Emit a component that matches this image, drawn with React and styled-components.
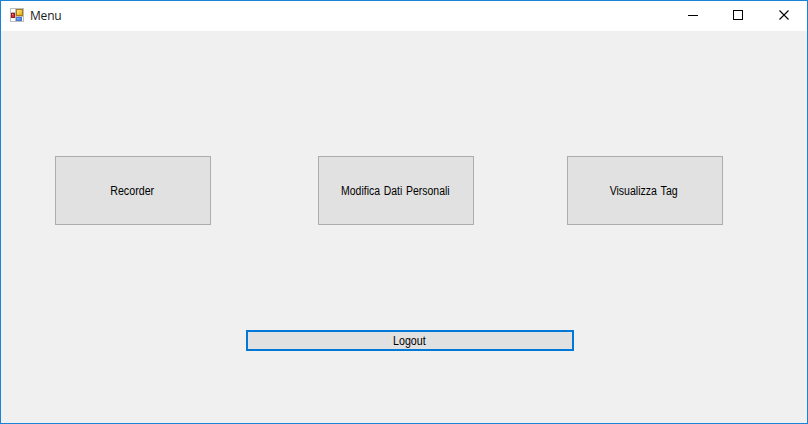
import React from 'react';
import styled, { createGlobalStyle } from 'styled-components';

const GlobalStyle = createGlobalStyle`
  *, *::before, *::after { box-sizing: border-box; }
  body { margin: 0; overflow: hidden; }
`;

const Window = styled.main`
  display: flex;
  flex-direction: column;
  width: 808px;
  height: 424px;
  border: 1px solid #1883d7;
  background: #f0f0f0;
  color: #000;
`;

const TitleBar = styled.header`
  display: flex;
  height: 30px;
  padding-left: 9px;
  background: #fff;
`;

const AppIcon = styled.svg`
  display: block;
  width: 14px;
  height: 14px;
  margin-top: 7px;
`;

const Title = styled.h1`
  flex: 1;
  margin: 0 0 0 6px;
  color: #1a1a1a;
  font: 400 12px/30px 'Open Sans', 'Noto Sans', sans-serif;
  letter-spacing: -0.2px;
`;

const CaptionButton = styled.button`
  display: flex;
  align-items: flex-start;
  width: ${(p) => p.$width}px;
  height: 29px;
  padding: 9px 0 0 17px;
  border: 0;
  background: transparent;
`;

const CaptionGlyph = styled.svg`
  display: block;
  flex: none;
  width: 11px;
  height: 11px;
  fill: none;
  stroke: #000;
`;

const Content = styled.section`
  display: flex;
  flex-direction: column;
  flex: 1;
  padding-top: 125px;
`;

const ActionRow = styled.div`
  display: grid;
  grid-template-columns: 263px 249px 156px;
  padding-left: 54px;
`;

const FormButton = styled.button`
  display: flex;
  align-items: center;
  justify-content: center;
  width: 156px;
  height: 69px;
  padding: 1px 0 0;
  border: 1px solid #adadad;
  border-radius: 0;
  background: #e1e1e1;
  color: #000;
  font: 400 12px/14px 'Liberation Sans', Arial, sans-serif;
  word-spacing: 1px;
  white-space: pre;
`;

const Label = styled.span`
  transform: translateX(${(p) => p.$nudge || 0}px) scaleX(${(p) => p.$stretch});
`;

const LogoutButton = styled(FormButton)`
  width: 328px;
  height: 21px;
  margin: 105px 0 0 245px;
  border: 2px solid #0078d7;
`;

export default function App() {
  return (
    <>
      <GlobalStyle />
      <Window>
        <TitleBar>
          <AppIcon viewBox="0 0 14 14" shapeRendering="crispEdges" aria-hidden="true">
            <defs>
              <linearGradient id="gold" x2="1" y2="1">
                <stop stopColor="#ffe990" />
                <stop offset="1" stopColor="#e9a900" />
              </linearGradient>
              <linearGradient id="blue" x2="1" y2="1">
                <stop stopColor="#8dbbff" />
                <stop offset="1" stopColor="#3a71d8" />
              </linearGradient>
            </defs>
            <path fill="#bdbdbd" d="M0 0h14v14H0z" />
            <path fill="#fff" d="M1 1h4v3H1zM1 10h4v3H1zM12 9h1v4h-1z" />
            <path fill="#9e1616" d="M1 5h4v5H1z" />
            <path fill="#d53b32" d="M2 6h2v3H2z" />
            <path fill="#f09a88" d="M2 6h1v1H2z" />
            <path fill="#a77918" d="M6 1h7v7H6z" />
            <path fill="url(#gold)" d="M7 2h5v5H7z" />
            <path fill="#4878cf" d="M6 9h6v4H6z" />
            <path fill="url(#blue)" d="M7 10h4v2H7z" />
          </AppIcon>
          <Title>Menu</Title>
          <CaptionButton $width={45} aria-label="Minimize">
            <CaptionGlyph viewBox="0 0 11 11" shapeRendering="crispEdges">
              <path d="M0 5.5h10" />
            </CaptionGlyph>
          </CaptionButton>
          <CaptionButton $width={46} aria-label="Maximize">
            <CaptionGlyph viewBox="0 0 11 11" shapeRendering="crispEdges">
              <path d="M.5.5h9v9h-9z" />
            </CaptionGlyph>
          </CaptionButton>
          <CaptionButton $width={45} aria-label="Close">
            <CaptionGlyph viewBox="0 0 11 11">
              <path d="m.5.5 9 9m0-9-9 9" strokeWidth="1.1" />
            </CaptionGlyph>
          </CaptionButton>
        </TitleBar>
        <Content>
          <ActionRow>
            <FormButton>
              <Label $stretch={0.89} $nudge={-0.5}>Recorder</Label>
            </FormButton>
            <FormButton>
              <Label $stretch={0.87} $nudge={-1}>Modifica Dati Personali</Label>
            </FormButton>
            <FormButton>
              <Label $stretch={0.88} $nudge={-1}>Visualizza Tag</Label>
            </FormButton>
          </ActionRow>
          <LogoutButton>
            <Label $stretch={0.89} $nudge={-1}>Logout</Label>
          </LogoutButton>
        </Content>
      </Window>
    </>
  );
}
